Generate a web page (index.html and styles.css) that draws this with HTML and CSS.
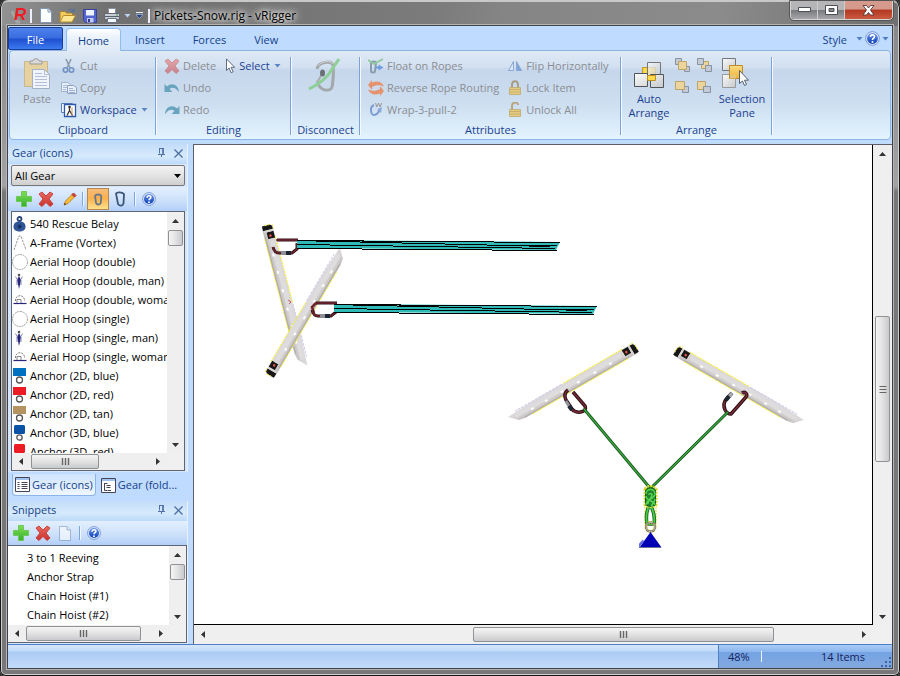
FILE: index.html
```html
<!DOCTYPE html>
<html lang="en">
<head>
<meta charset="utf-8">
<title>Pickets-Snow.rig - vRigger</title>
<link rel="stylesheet" href="styles.css">
</head>
<body>
<svg class="defs" aria-hidden="true">
  <defs>
    <linearGradient id="gBlue" x1="0" y1="0" x2="0" y2="1"><stop offset="0" stop-color="#6a94ea"/><stop offset="1" stop-color="#0b3fb8"/></linearGradient>
    <linearGradient id="gGreen" x1="0" y1="0" x2="0" y2="1"><stop offset="0" stop-color="#7ee052"/><stop offset="1" stop-color="#35ad2c"/></linearGradient>
    <linearGradient id="gRed" x1="0" y1="0" x2="0" y2="1"><stop offset="0" stop-color="#ea6a62"/><stop offset="1" stop-color="#c92f2b"/></linearGradient>
    <linearGradient id="gSteel" x1="0" y1="0" x2="1" y2="1"><stop offset="0" stop-color="#fbfbfb"/><stop offset="1" stop-color="#c6c9cc"/></linearGradient>
    <linearGradient id="gGold" x1="0" y1="0" x2="0" y2="1"><stop offset="0" stop-color="#fbdc85"/><stop offset="1" stop-color="#efb22e"/></linearGradient>
    <linearGradient id="gPicket" x1="0" y1="0" x2="0" y2="1"><stop offset="0" stop-color="#dedbdf"/><stop offset=".6" stop-color="#d6d3d4"/><stop offset="1" stop-color="#bdb8b6"/></linearGradient>
    <symbol id="i-plus" viewBox="0 0 16 16"><path d="M5.5.5h5v5h5v5h-5v5h-5v-5h-5v-5h5z" fill="url(#gGreen)" stroke="#6cc957"/></symbol>
    <symbol id="i-cross" viewBox="0 0 16 16"><path d="M1 3l3-2 4 4 4-4 3 2-4 5 4 5-3 2.500-4-4-4 4L1 13l4-5z" fill="url(#gRed)" stroke="#c8413c"/></symbol>
    <symbol id="i-help" viewBox="0 0 16 16"><circle cx="8" cy="8" r="7.300" fill="#e6eefb" stroke="#6a8fd6"/><circle cx="8" cy="8" r="5.800" fill="url(#gBlue)"/><path d="M5.800 6.500c0-3.200 4.600-2.900 4.400-.3C10.100 7.700 8 7.700 8 9.500" fill="none" stroke="#fff" stroke-width="1.700"/><circle cx="8" cy="11.700" r="1.100" fill="#fff"/></symbol>
    <symbol id="i-pointer" viewBox="0 0 12 18"><path d="M1.500 1v13l3-2.800 2.200 5.300 2.300-1-2.300-5h4z" fill="#fff" stroke="#4f5b73"/></symbol>
    <symbol id="i-pin" viewBox="0 0 9 10"><path d="M2.500 1v4.500M6 1v4.500" stroke="#5272a8"/><path d="M2 .5h5M1 6.500h7M4.500 6.500V9" fill="none" stroke="#5272a8"/><path d="M6 .5V6" stroke="#5272a8" stroke-width="1.500"/></symbol>
    <symbol id="i-close" viewBox="0 0 9 9"><path d="M.5.500l8 8M8.500.500l-8 8" stroke="#5272a8" stroke-width="1.400"/></symbol>
    <symbol id="i-doc" viewBox="0 0 12 15"><path d="M.5.500h7.500l3.500 3.500v10.500H.5z" fill="#fdfeff" stroke="#8297b5"/><path d="M8 .5V4h3.500" fill="#dce6f4" stroke="#8297b5"/></symbol>
    <symbol id="i-lock" viewBox="0 0 14 16"><path d="M4 8V5c0-5 6-5 6 0v3" fill="none" stroke="#a79c83" stroke-width="2"/><path d="M1.500 7.500h11v7h-11z" fill="#e3ca85" stroke="#c4b27d"/><path d="M2 9.500h10M2 12h10" stroke="#cdb067"/></symbol>
    <symbol id="i-unlock" viewBox="0 0 14 16"><path d="M4 8V4c0-4.500 6-4.500 6-1" fill="none" stroke="#b5a67e" stroke-width="2"/><path d="M1.500 7.500h11v7h-11z" fill="#e3ca85" stroke="#c4b27d"/><path d="M2 9.500h10M2 12h10" stroke="#cdb067"/></symbol>
    <symbol id="g-hoop" viewBox="0 0 16 16"><circle cx="8" cy="8" r="7.500" fill="#fff" stroke="#8c8c8c" stroke-dasharray="2 .7" stroke-width=".8"/></symbol>
    <symbol id="g-man" viewBox="0 0 16 16"><circle cx="7" cy="2" r="1.300" fill="#555"/><path d="M7 3l2 4-.8 4-1.200 5-1-5L5 7z" fill="#25257c"/><path d="M3.500 3.500l2 3.500M10.500 3.500l-2 3.500M5 7v5M9 7v5" stroke="#7b7bae" stroke-width=".9"/></symbol>
    <symbol id="g-woman" viewBox="0 0 16 16"><path d="M3.500 9c-.5-7 9.500-7 9 0" fill="none" stroke="#777" stroke-dasharray="2 1"/><path d="M1.500 11.500h13" stroke="#25257c" stroke-width="1.200"/><path d="M5 11V7.500h4V11" fill="none" stroke="#888"/></symbol>
    <symbol id="arrow" viewBox="0 0 7 4"><path d="M.5 0h6l-3 3.500z" fill="currentColor"/></symbol>
    <symbol id="thumb-v" viewBox="0 0 8 8"><path d="M.5 1.500h7M.5 4.500h7M.5 7.500h7" stroke="#666"/></symbol>
    <symbol id="thumb-h" viewBox="0 0 9 8"><path d="M1.500 0v7M4.500 0v7M7.500 0v7" stroke="#666" stroke-width="1.400"/></symbol>
    <symbol id="s-up" viewBox="0 0 7 4"><path d="M0 4h7L3.500 0z" fill="#333"/></symbol>
    <symbol id="s-down" viewBox="0 0 7 4"><path d="M0 0h7L3.500 4z" fill="#333"/></symbol>
    <symbol id="s-left" viewBox="0 0 4 7"><path d="M4 0v7L0 3.500z" fill="#333"/></symbol>
    <symbol id="s-right" viewBox="0 0 4 7"><path d="M0 0v7l4-3.500z" fill="#333"/></symbol>
  </defs>
</svg>

<div class="window">
  <header class="titlebar">
    <div class="quick">
      <svg class="logo" width="20" height="20" viewBox="0 0 20 20"><path d="M2 5l5 11h3" fill="none" stroke="#a3a5a7" stroke-width="3"/><text x="4" y="14">R</text></svg>
      <i class="tick"></i>
      <button aria-label="New"><svg width="12" height="15"><use href="#i-doc"/></svg></button>
      <button aria-label="Open"><svg width="17" height="15" viewBox="0 0 17 15"><path d="M1 14V3.500h5l1.500 1.500h6V8" fill="#f3cc60" stroke="#a5802d"/><path d="M1 14L4.500 7.500h12L13 14z" fill="#ffe793" stroke="#b58b2c"/><path d="M9 3c2-2.500 4-2 5.500 0M15 .5V4h-3.500" fill="none" stroke="#496fa9"/></svg></button>
      <button aria-label="Save"><svg width="14" height="14" viewBox="0 0 14 14"><path d="M.5.500h13v13h-11l-2-2z" fill="#5365cf" stroke="#39429e"/><path d="M3 1h8v5.500H3z" fill="#edf3ff"/><path d="M4 9h6.500v4.500H4z" fill="#c4cdf0"/><path d="M5 10h2v3H5z" fill="#31398b"/></svg></button>
      <button aria-label="Print"><svg width="16" height="15" viewBox="0 0 16 15"><path d="M4.500.5h7V6h-7z" fill="#fff" stroke="#8791a3"/><path d="M.5 5.500h15v6H.5z" fill="#c8ccd3" stroke="#616873"/><path d="M1 8.500h14" stroke="#59606b"/><path d="M3.500 10.500h9v4h-9z" fill="#f5f8ff" stroke="#68748a"/><path d="M12 7h2" stroke="#43a54a"/></svg></button>
      <svg class="qarrow" width="7" height="4"><use href="#arrow"/></svg>
      <svg class="qarrow last" width="7" height="7" viewBox="0 0 7 7"><path d="M0 .5h7" stroke="#e6efff"/><path d="M0 2.500h7L3.500 6.500z" fill="#204080" stroke="#b9cbe8" stroke-width=".6"/></svg>
      <i class="tick"></i>
    </div>
    <h1>Pickets-Snow.rig - vRigger</h1>
    <div class="caption">
      <button aria-label="Minimize"><svg width="13" height="6" viewBox="0 0 13 6"><path d="M.5.500h12v4H.5z" fill="#fff" stroke="#4b4f57"/></svg></button>
      <button aria-label="Maximize"><svg width="13" height="11" viewBox="0 0 13 11"><path d="M.5.500h12v9H.5z" fill="#fff" stroke="#4b4f57"/><path d="M4 3.500h5v3H4z" fill="#888" stroke="#4b4f57"/></svg></button>
      <button class="exit" aria-label="Close"><svg width="13" height="11" viewBox="0 0 13 11"><path d="M1 .500h3.500L6.500 3l2-2.500H12L8.500 5l3.500 5H8.500l-2-2.500-2 2.500H1L4.500 5z" fill="#fff" stroke="#54373a" stroke-width=".9"/></svg></button>
    </div>
  </header>

  <div class="client">
    <nav class="tabs">
      <button class="tab file">File</button>
      <button class="tab active">Home</button>
      <button class="tab">Insert</button>
      <button class="tab">Forces</button>
      <button class="tab">View</button>
      <div class="tabs-right">
        <button>Style</button>
        <svg width="7" height="4"><use href="#arrow"/></svg>
        <button aria-label="Help"><svg width="15" height="15"><use href="#i-help"/></svg></button>
        <svg width="7" height="4"><use href="#arrow"/></svg>
      </div>
    </nav>

    <section class="ribbon">
      <div class="group clipboard">
        <div class="body">
          <button class="big off"><svg width="28" height="32" viewBox="0 0 28 32"><path d="M1.500 3.500h23v25h-23z" fill="#e6d2a1" stroke="#c9b98f"/><path d="M7 6V3h3c0-3 6-3 6 0h3v3z" fill="#dadada" stroke="#999"/><path d="M9.500 11.500h12l5 5v14h-17z" fill="#f1f5fb" stroke="#a3b0c6"/><path d="M21.500 11.500v5h5M12 15.500h7M12 18.500h12M12 21.500h12M12 24.500h12M12 27.500h12" fill="none" stroke="#b2bfd6"/></svg><span>Paste</span></button>
          <div class="rows">
            <button class="off"><svg width="16" height="16" viewBox="0 0 16 16"><path d="M5 1l4 9M10 1l-4 9" stroke="#8c99ad" stroke-width="1.500"/><circle cx="4.500" cy="12" r="2.200" fill="none" stroke="#7291c3" stroke-width="1.600"/><circle cx="10.500" cy="12" r="2.200" fill="none" stroke="#7291c3" stroke-width="1.600"/></svg>Cut</button>
            <button class="off"><svg width="16" height="16" viewBox="0 0 16 16"><path d="M.5 2.500h6l3 2v7h-9z" fill="#eaf0f9" stroke="#9fb0cc"/><path d="M2 5.500h4M2 7.500h4M2 9.500h3" stroke="#a9b9d6"/><path d="M6.500 5.500h6l3 2v6h-9z" fill="#eaf0f9" stroke="#8fa2c3"/><path d="M8 8.500h4M8 10.500h6M8 12.500h6" stroke="#9bb0d3"/></svg>Copy</button>
            <button><svg width="16" height="16" viewBox="0 0 16 16"><path d="M.5 1.500h11v9H.5z" fill="#eef5ff" stroke="#5d7fb8"/><path d="M3.500 2.500h11v12h-11z" fill="#fff" stroke="#2f58a8" stroke-width="1.300"/><circle cx="8.500" cy="5" r="1.300" fill="#333"/><path d="M8.500 6v3M6 13.500l2.500-5 3 5" stroke="#333" fill="none" stroke-width="1.300"/><path d="M11 5.500v8" stroke="#d1924d"/></svg>Workspace<svg class="dd" width="7" height="4"><use href="#arrow"/></svg></button>
          </div>
        </div>
        <h2>Clipboard</h2>
      </div>
      <div class="group editing">
        <div class="body">
          <div class="rows">
            <button class="off"><svg class="faded" width="16" height="16"><use href="#i-cross"/></svg>Delete</button>
            <button class="off"><svg width="16" height="16" viewBox="0 0 16 16"><path d="M.5 4v8h8L5.500 9c3-2.500 6-1.500 9.500 3-.5-7-7-10-12-5.500z" fill="#69a3bd"/></svg>Undo</button>
            <button class="off"><svg width="16" height="16" viewBox="0 0 16 16"><path d="M15.500 4v8h-8l3-3C7.500 6.500 4.500 7.500 1 12c.5-7 7-10 12-5.500z" fill="#69a3bd"/></svg>Redo</button>
          </div>
          <div class="rows tight">
            <button><svg width="11" height="16"><use href="#i-pointer"/></svg>Select<svg class="dd" width="7" height="4"><use href="#arrow"/></svg></button>
          </div>
        </div>
        <h2>Editing</h2>
      </div>
      <div class="group disconnect">
        <div class="body">
          <button class="big off" aria-label="Disconnect"><svg width="34" height="34" viewBox="0 0 34 34"><path d="M9 11c1-7 14-9 16-4 1 3 0 18-1 22-1 4-8 4-11 1-3-3-4-5-3-7" fill="none" stroke="#a3a8aa" stroke-width="3"/><path d="M10 8c3-5 13-6 15-2" fill="none" stroke="#d3d6d8"/><path d="M10 23l5-9" stroke="#a9adb0" stroke-width="2"/><ellipse cx="14.500" cy="15" rx="2.500" ry="3.500" fill="#6a7075"/><path d="M1 31c8-4 13-7 19-14L31 1" fill="none" stroke="#8dcf96" stroke-width="3"/></svg></button>
        </div>
        <h2>Disconnect</h2>
      </div>
      <div class="group attributes">
        <div class="body">
          <div class="rows">
            <button class="off"><svg width="16" height="16" viewBox="0 0 16 16"><path d="M3 5c0-2 5-2 5 0l-1 8c0 2-4 2-4 0z" fill="none" stroke="#8b9cae" stroke-width="2"/><path d="M0 2l6 4 9-5" fill="none" stroke="#8dc99a" stroke-width="1.600"/><path d="M15.500 9.500l-5-3v2h-3v2h3v2z" fill="#6d9ce0"/></svg>Float on Ropes</button>
            <button class="off"><svg width="16" height="16" viewBox="0 0 16 16"><path d="M0 5l4-5v2.500c5-2 10-1 12 4-4-1.500-8-2-12 .5v3z" fill="#e5936e"/><path d="M16 11l-4 5v-2.500c-5 2-10 1-12-4 4 1.500 8 2 12-.5V6z" fill="#e5936e"/></svg>Reverse Rope Routing</button>
            <button class="off"><svg width="16" height="16" viewBox="0 0 16 16"><path d="M6 3C1 5 3 13 6 13s5-3 6-7" fill="none" stroke="#7d9cd4" stroke-width="2"/><path d="M9 8l5-3-1 6z" fill="#88a8de"/><path d="M7.500 1l1.300 4 1.700-4 1.700 4 1.300-4" fill="none" stroke="#999"/></svg>Wrap-3-pull-2</button>
          </div>
          <div class="rows flip">
            <button class="off"><svg width="14" height="14" viewBox="0 0 14 14"><path d="M5.500 2.500v9h-5z" fill="#dbe7f8" stroke="#8ba7d3"/><path d="M8.500 2.500v9h5z" fill="#7fa3dc" stroke="#8ba7d3"/></svg>Flip Horizontally</button>
            <button class="off"><svg width="14" height="16"><use href="#i-lock"/></svg>Lock Item</button>
            <button class="off"><svg width="14" height="16"><use href="#i-unlock"/></svg>Unlock All</button>
          </div>
        </div>
        <h2>Attributes</h2>
      </div>
      <div class="group arrange">
        <div class="body">
          <button class="big"><svg width="30" height="32" viewBox="0 0 30 32"><path d="M8.500 9.500h13v13h-13z" fill="#ffd84c" stroke="#c89a2b"/><path d="M13.500 4.500h13v13h-13z" fill="url(#gSteel)" fill-opacity=".75" stroke="#777"/><path d="M.5 15.500h13v13H.5zM16.500 16.500h13v13h-13z" fill="url(#gSteel)" stroke="#50555a"/><path d="M13.500 17.500h8v5h-8z" fill="#ffd84c" stroke="#ba9120"/></svg><span>Auto<br>Arrange</span></button>
          <div class="minis">
            <button aria-label="Bring forward"><svg width="16" height="16" viewBox="0 0 16 16"><path d="M.5.500h6v6h-6zM9.500 8.500h5v5h-5z" fill="#c5cbd4" stroke="#8792a2"/><path d="M3.500 3.500h8v8h-8z" fill="#ecd59d" stroke="#bfa266"/></svg></button>
            <button aria-label="Send backward"><svg width="16" height="16" viewBox="0 0 16 16"><path d="M4.500 3.500h7v7h-7z" fill="#ecd59d" stroke="#bfa266"/><path d="M.5.500h6v6h-6zM8.500 7.500h6v6h-6z" fill="#c5cbd4" stroke="#8792a2"/></svg></button>
            <button aria-label="Bring to front"><svg width="16" height="16" viewBox="0 0 16 16"><path d="M7.500 6.500h6v6h-6z" fill="#c5cbd4" stroke="#8792a2"/><path d="M.5 1.500h9v8h-9z" fill="#ecd59d" stroke="#bfa266"/></svg></button>
            <button aria-label="Send to back"><svg width="16" height="16" viewBox="0 0 16 16"><path d="M.5 1.500h8v8h-8z" fill="#ecd59d" stroke="#bfa266"/><path d="M6.500 6.500h7v6h-7z" fill="#c5cbd4" stroke="#8792a2"/></svg></button>
          </div>
          <button class="big"><svg width="32" height="32" viewBox="0 0 32 32"><path d="M.5.500h13v12H.5z" fill="url(#gSteel)" stroke="#71777d"/><path d="M.5 16.500h13v13H.5z" fill="url(#gSteel)" stroke="#999"/><path d="M7.500 7.500h13v13h-13z" fill="url(#gGold)" stroke="#c08a2b"/><path d="M8 16.500h6v4H8z" fill="#e3c679"/><path d="M17.500 12.500v13l3-2.500 2 4.500 2-1-2-4.300h4z" fill="#fff" stroke="#555f70"/></svg><span>Selection<br>Pane</span></button>
        </div>
        <h2>Arrange</h2>
      </div>
    </section>

    <main class="work">
      <aside class="side">
        <section class="panel gear">
          <div class="panel-head"><h3>Gear (icons)</h3><button aria-label="Pin"><svg width="9" height="10"><use href="#i-pin"/></svg></button><button aria-label="Close panel"><svg width="9" height="9"><use href="#i-close"/></svg></button></div>
          <div class="picker">
            <select aria-label="Gear category"><option>All Gear</option></select>
            <svg width="9" height="5" viewBox="0 0 9 5"><path d="M1 0h7L4.500 4z" fill="#000"/></svg>
          </div>
          <div class="tools">
            <button aria-label="Add gear"><svg width="16" height="16"><use href="#i-plus"/></svg></button>
            <button aria-label="Delete gear"><svg width="16" height="16"><use href="#i-cross"/></svg></button>
            <button aria-label="Edit gear"><svg width="14" height="14" viewBox="0 0 14 14"><path d="M1 13l1.500-4L9 2.500 11.500 5 5 11.500z" fill="#f8bd35" stroke="#b67a1f" stroke-width=".8"/><path d="M9 2.500L10.500 1 13 3.500 11.500 5z" fill="#dd4638" stroke="#a92c24"/><path d="M1 13l.8-2 1.300 1.300z" fill="#222"/></svg></button>
            <i class="tick"></i>
            <button class="pressed" aria-label="Small icons"><svg width="12" height="16" viewBox="0 0 12 16"><path d="M3 5c1-2 5-2 6.300 0L8.700 12c-.7 2-3.700 2-4.700 0z" fill="none" stroke="#6a7788" stroke-width="1.800"/></svg></button>
            <button class="wide" aria-label="Large icons"><svg width="12" height="16" viewBox="0 0 12 16"><path d="M2 2.500C3 .8 8 .8 10 3l-.5 9.500c-1 3-4 2.500-5.500.5z" fill="none" stroke="#3b5778" stroke-width="1.800"/></svg></button>
            <i class="tick"></i>
            <button aria-label="Gear help"><svg width="14" height="14"><use href="#i-help"/></svg></button>
          </div>
          <div class="list-box">
            <ul class="list">
              <li><svg width="16" height="16" viewBox="0 0 16 16"><circle cx="7.500" cy="3" r="2" fill="none" stroke="#29457c" stroke-width="1.800"/><path d="M7.500 5c5 1 6 3 6 6s-3 4.500-6 4.500S1.500 14 1.500 11s1-5 6-6z" fill="#2f5596"/><circle cx="7.500" cy="10.500" r="2" fill="#173163"/></svg>540 Rescue Belay</li>
              <li><svg width="16" height="16" viewBox="0 0 16 16"><path d="M2 15L7 1h2l5 14" fill="none" stroke="#999" stroke-dasharray="2.500 1"/></svg>A-Frame (Vortex)</li>
              <li><svg width="16" height="16"><use href="#g-hoop"/></svg>Aerial Hoop (double)</li>
              <li><svg width="16" height="16"><use href="#g-man"/></svg>Aerial Hoop (double, man)</li>
              <li><svg width="16" height="16"><use href="#g-woman"/></svg>Aerial Hoop (double, woman)</li>
              <li><svg width="16" height="16"><use href="#g-hoop"/></svg>Aerial Hoop (single)</li>
              <li><svg width="16" height="16"><use href="#g-man"/></svg>Aerial Hoop (single, man)</li>
              <li><svg width="16" height="16"><use href="#g-woman"/></svg>Aerial Hoop (single, woman)</li>
              <li><svg width="16" height="16" viewBox="0 0 16 16"><path d="M1 0h13v8H1z" fill="#0070c0"/><circle cx="7.500" cy="12" r="3" fill="none" stroke="#555" stroke-width="1.300"/></svg>Anchor (2D, blue)</li>
              <li><svg width="16" height="16" viewBox="0 0 16 16"><path d="M1 0h13v8H1z" fill="#ed1c24"/><circle cx="7.500" cy="12" r="3" fill="none" stroke="#555" stroke-width="1.300"/></svg>Anchor (2D, red)</li>
              <li><svg width="16" height="16" viewBox="0 0 16 16"><path d="M1 0h13v8H1z" fill="#b5935f"/><circle cx="7.500" cy="12" r="3" fill="none" stroke="#555" stroke-width="1.300"/></svg>Anchor (2D, tan)</li>
              <li><svg width="16" height="16" viewBox="0 0 16 16"><path d="M3 0h9l1 1v7l-1 1H3L2 8V1z" fill="#0a52a5"/><circle cx="7.500" cy="12.500" r="2.700" fill="none" stroke="#555" stroke-width="1.300"/></svg>Anchor (3D, blue)</li>
              <li><svg width="16" height="16" viewBox="0 0 16 16"><path d="M3 0h9l1 1v7l-1 1H3L2 8V1z" fill="#ed1c24"/><circle cx="7.500" cy="12.500" r="2.700" fill="none" stroke="#555" stroke-width="1.300"/></svg>Anchor (3D, red)</li>
            </ul>
            <div class="sv sv-list"><svg width="7" height="4"><use href="#s-up"/></svg><i></i><b></b><i></i><svg width="7" height="4"><use href="#s-down"/></svg></div>
            <div class="sh sh-list"><svg width="4" height="7"><use href="#s-left"/></svg><i></i><b><svg width="9" height="8"><use href="#thumb-h"/></svg></b><i></i><svg width="4" height="7"><use href="#s-right"/></svg></div>
          </div>
        </section>
        <div class="dock-tabs">
          <button class="on"><svg width="15" height="15" viewBox="0 0 15 15"><path d="M.5.500h14v14H.5z" fill="#fff" stroke="#445"/><path d="M1 2h13" stroke="#9fc3ee" stroke-width="2"/><path d="M2.500 5.500h2M2.500 7.500h2M2.500 9.500h2M2.500 11.500h2M6.500 5.500h6M6.500 7.500h6M6.500 9.500h6M6.500 11.500h6" stroke="#445"/></svg>Gear (icons)</button>
          <button><svg width="15" height="15" viewBox="0 0 15 15"><path d="M.5.500h14v14H.5z" fill="#fff" stroke="#445"/><path d="M1 2h13" stroke="#9fc3ee" stroke-width="2"/><path d="M3.500 5v7.500h3M3.500 5.500h3M5.500 7.500h4M5.500 9.500h4M7 12.500h3" fill="none" stroke="#445"/></svg>Gear (fold...</button>
        </div>
        <section class="panel snippets">
          <div class="panel-head"><h3>Snippets</h3><button aria-label="Pin"><svg width="9" height="10"><use href="#i-pin"/></svg></button><button aria-label="Close panel"><svg width="9" height="9"><use href="#i-close"/></svg></button></div>
          <div class="tools">
            <button aria-label="Add snippet"><svg width="16" height="16"><use href="#i-plus"/></svg></button>
            <button aria-label="Delete snippet"><svg width="16" height="16"><use href="#i-cross"/></svg></button>
            <button class="faded" aria-label="New snippet"><svg width="12" height="15"><use href="#i-doc"/></svg></button>
            <i class="tick"></i>
            <button aria-label="Snippets help"><svg width="14" height="14"><use href="#i-help"/></svg></button>
          </div>
          <div class="list-box">
            <ul class="list plain"><li>3 to 1 Reeving</li><li>Anchor Strap</li><li>Chain Hoist (#1)</li><li>Chain Hoist (#2)</li></ul>
            <div class="sv sv-snip"><svg width="7" height="4"><use href="#s-up"/></svg><i></i><b></b><i></i><svg width="7" height="4"><use href="#s-down"/></svg></div>
            <div class="sh sh-snip"><svg width="4" height="7"><use href="#s-left"/></svg><i></i><b><svg width="9" height="8"><use href="#thumb-h"/></svg></b><i></i><svg width="4" height="7"><use href="#s-right"/></svg></div>
          </div>
        </section>
      </aside>

      <section class="stage">
        <div class="canvas">
          <svg class="drawing" role="img" aria-label="Rigging drawing">
            <defs>
              <g id="picket">
                <path d="M-4-5.500H104L141-4l-8 8-7 1.500H-4z" fill="url(#gPicket)"/>
                <path d="M8-5.500H76M8 5.500H118" stroke="#f4ee2c" stroke-dasharray="2 1" fill="none"/>
                <path d="M78-5.500H132" stroke="#cfcbe6" stroke-dasharray="3 1"/>
                <path d="M6 4.500H126" stroke="#b1aba8"/>
                <path d="M12-1H134" stroke="#dfdcde" stroke-width="4"/>
                <path d="M24 1h3M42 1h3M61 1h3M80 1h3M98 1h3M114 1h3" stroke="#fff" stroke-width="2"/>
                <path d="M-5-3l2-2h3v10h-5zM2-5h7v7H2z" fill="#181616"/>
                <path d="M0-4h2V5H0zM9-3h2v5H9z" fill="#d9d5d2"/><path d="M-4-5.500h4M-5-3v6" stroke="#e9e23a" stroke-dasharray="2 1"/>
                <circle cx="6" cy="-1" r="1.300" fill="#e0524a"/>
              </g>
              <g id="rope">
                <path d="M297 240L560 242l-4 8-259-2z" fill="#2fbab8"/>
                <g shape-rendering="crispEdges" stroke="#000" fill="none">
                  <path d="M297 240.500h67M362 241.500h132M494 242.500h66M316 241.500h44M360 242.500h42M402 243.500h43M445 244.500h42M487 245.500h70M297 244.500h33M330 245.500h63M393 246.500h65M458 247.500h64M522 248.500h33M297 248.500h65M362 249.500h130M492 250.500h65M529 246.500h21"/>
                </g>
              </g>
              <g id="biner">
                <path d="M4 1H25M0 8c1 4 3 6 6 6h13l5-4V4" fill="none" stroke="#2b1218" stroke-width="3"/>
                <path d="M3 1H25M0 8c1 4 3 6 6 6h13l5-4V4" fill="none" stroke="#74242f" stroke-width="1.500"/>
                <path d="M8 14h5" stroke="#8c9499" stroke-width="3"/><path d="M13 14h5" stroke="#1d2733" stroke-width="4"/>
              </g>
            </defs>
            <g transform="translate(-194 -145)">
            <use href="#picket" transform="translate(268 230) rotate(75.400)"/>
            <use href="#picket" transform="translate(272 371) rotate(-59.600)"/>
            <use href="#picket" transform="translate(632 350) scale(-1 1) rotate(30)"/>
            <use href="#picket" transform="translate(680 353) rotate(30)"/>
            <path d="M288 300l3 2-2 2" fill="none" stroke="#cc5a62"/>
            <use href="#biner" transform="translate(273 239)"/>
            <path d="M314 313l-2-6 4-4" fill="none" stroke="#74242f" stroke-width="2.500"/>
            <use href="#biner" transform="translate(312 302)"/>
            <use href="#rope"/>
            <use href="#rope" transform="translate(37 64)"/>
            <g fill="none" stroke-linejoin="round">
              <path d="M568 390c-4 3-4 6-2 10l6 9c3 5 16 4 13-3l-12-14" stroke="#2b1218" stroke-width="3.500"/>
              <path d="M568 390c-4 3-4 6-2 10l6 9c3 5 16 4 13-3l-12-14" stroke="#7a2a35" stroke-width="1.500"/>
              <path d="M566 401l3 5" stroke="#8c9499" stroke-width="3"/><path d="M569 406l3 4" stroke="#1d2733" stroke-width="4"/>
              <path d="M732 393l-7 8c-3 6 1 13 6 13l15-17c2-3-1-6-4-4" stroke="#2b1218" stroke-width="3.500"/>
              <path d="M725 401c-3 6 1 13 6 13l15-17c2-3-1-6-4-4" stroke="#7a2a35" stroke-width="1.500"/>
              <path d="M732 393l-3 4" stroke="#a6abb0" stroke-width="3"/><path d="M729 396l-3 4" stroke="#1d2733" stroke-width="4"/>
              <path d="M584 409l66 79M728 412l-77 76" stroke="#16541c" stroke-width="3"/>
              <path d="M584 409l66 79M728 412l-77 76" stroke="#3aa83c" stroke-width="1.200"/>
              <path d="M645 507v19M656 507v19" stroke="#e3dc2f" stroke-dasharray="2 1"/>
              <path d="M649 506c-3 6-3 12-2 18h7c1-6 0-12-3-18" stroke="#1c6b22" stroke-width="3.500"/>
              <path d="M649 506c-3 6-3 12-2 18h7c1-6 0-12-3-18" stroke="#45cb48" stroke-width="1.700"/>
              <path d="M645 489q5-5 11 0v16q-5 3-11 0z" fill="#2f9a34" stroke="#ddd62d" stroke-dasharray="2 1" stroke-width="3"/>
              <path d="M645.500 490q5-5 10 0v15q-5 3-10 0z" fill="#237f2a" stroke="#17631d"/>
              <path d="M646 494c0-6 9-6 9 0 0 5-9 5-9 11M646 496c0 5 9 5 9 9M649 495c0-2 3-2 3 0 0 3-5 6-4 9M652 507c-1-4 3-4 3-8" stroke="#53d253" stroke-width="1.600"/>
              <circle cx="650.500" cy="527" r="4.500" stroke="#d8cd32" stroke-width="3" stroke-dasharray="2 1"/>
              <circle cx="650.500" cy="527" r="4.500" stroke="#5c5a50" stroke-width="2"/>
              <circle cx="650.500" cy="527" r="4.500" stroke="#d3cfc2"/>
            </g>
            <path d="M650.500 532l11 15.500h-22z" fill="#0000b4"/><path d="M639 547.500v-4l4-4 1 2z" fill="#5c6ae6"/><path d="M639 547.500h22" stroke="#6b7392"/>
            </g>
          </svg>
        </div>
        <div class="sv sv-main"><svg width="7" height="4"><use href="#s-up"/></svg><i></i><b><svg width="8" height="8"><use href="#thumb-v"/></svg></b><i></i><svg width="7" height="4"><use href="#s-down"/></svg></div>
        <div class="sh sh-main"><svg width="4" height="7"><use href="#s-left"/></svg><i></i><b><svg width="9" height="8"><use href="#thumb-h"/></svg></b><i></i><svg width="4" height="7"><use href="#s-right"/></svg></div>
      </section>
    </main>

    <footer class="status">
      <div class="status-info">
        <span>48%</span><i class="tick"></i><span class="count">14 Items</span>
        <svg width="12" height="12" viewBox="0 0 12 12"><path d="M9 1h2v2H9zM5 5h2v2H5zM9 5h2v2H9zM1 9h2v2H1zM5 9h2v2H5zM9 9h2v2H9z" fill="#3f66a8"/></svg>
      </div>
    </footer>
  </div>
</div>
</body>
</html>
```
FILE: styles.css
```css
* { box-sizing: border-box; margin: 0; padding: 0; }
html, body { height: 100%; }
body { font: 11px/16px "Open Sans", "Noto Sans", sans-serif; color: #000; background: #333; }
button { font: inherit; color: inherit; background: none; border: 0; display: flex; align-items: center; white-space: nowrap; }
svg { display: block; flex: none; }
h1, h2, h3 { font-size: inherit; font-weight: normal; }
ul { list-style: none; }
.defs { position: absolute; width: 0; height: 0; }
.faded { opacity: .5; }
.tick { width: 2px; height: 14px; border-left: 1px solid #7ba6dd; border-right: 1px solid #eef6ff; }

/* Window frame */
.window {
  height: 100vh; min-height: 560px; display: flex; flex-direction: column; padding: 0 8px 8px;
  border-radius: 8px 8px 6px 6px;
  background: linear-gradient(#858585 0, #a2a2a2 186px, #777 192px, #787878);
  box-shadow: inset 0 0 0 1px #17171a, inset 0 0 0 2px #cfcfcf;
}
.titlebar {
  display: flex; align-items: center; height: 26px; flex: none; padding-top: 3px;
  margin: 0 -6px; padding-left: 8px;
  background: linear-gradient(100deg, #929292 0, #707070 12%, #7b7b7b 48%, #858585 56%, #8b8b8b 80%, #6f6f6f 100%);
  border-top: 2px solid #c8c8c8; border-radius: 6px 6px 0 0;
}
.quick { display: flex; align-items: center; }
.quick button { margin-right: 7px; }
.quick .tick { height: 14px; margin: 0 8px 0 0; border-color: #7b9fcf #eef; }
.quick .tick:last-child { margin: 0 4px 0 5px; }
.logo text { font: italic bold 17px "Liberation Sans", sans-serif; fill: #ee1c25; }
.qarrow { color: #bcd3f5; margin: 0 5px 0 -3px; }
.qarrow.last { margin: 0; }
.titlebar h1 { font-size: 12px; text-shadow: 0 0 5px #fff, 0 0 8px #ddd, 0 0 10px #ddd; }
.caption { display: flex; margin-left: auto; align-self: flex-start; margin-top: -4px; height: 19px; border: 1px solid #d5d5d5; border-top: 0; border-radius: 0 0 4px 4px; outline: 1px solid #555; overflow: hidden; margin-right: 5px; }
.caption button { width: 27px; justify-content: center; background: linear-gradient(#b5b5b7 0 48%, #77787b 50%, #a6a7aa); border-right: 1px solid #ccc; }
.caption .exit { width: 47px; border: 0; background: linear-gradient(#d69a8c 0 45%, #b33820 50%, #cb5b42); }
.client { flex: 1; min-height: 0; display: flex; flex-direction: column; background: #bfdbff; outline: 1px solid #3f4248; box-shadow: 0 0 0 2px #b5b5b5; }

/* Tabs */
.tabs { display: flex; height: 23px; flex: none; margin-top: 1px; color: #15428b; align-items: stretch; }
.tab { padding: 2px 14px 0; justify-content: center; }
.tab.file { margin: 0 3px 0 0; width: 55px; color: #fff; background: linear-gradient(#4d82ea 0, #3a6de0 45%, #1f50cf 55%, #3b7bf0); border: 1px solid #1a3c96; border-radius: 2px; }
.tab.active { margin: 1px 0 -1px; width: 55px; padding: 1px 0 0; background: linear-gradient(#fff, #eaf2fb 40%, #e0ebf7); border: 1px solid #8fbef0; border-bottom: 0; border-radius: 4px 4px 0 0; z-index: 1; }
.tabs-right { display: flex; align-items: center; margin-left: auto; gap: 5px; padding: 0 3px 0 0; color: #4f7ec0; }
.tabs-right button:first-child { color: #15428b; margin-right: 4px; padding-top: 2px; }
.tabs-right svg:last-child { margin-left: -3px; }

/* Ribbon */
.ribbon { display: flex; flex: none; height: 90px; margin: 0 1px; padding-left: 1px; border: 1px solid #8db5e6; border-radius: 4px; color: #1b3f91; background: linear-gradient(#dee9f5 0, #d2e0f0 18%, #c6d7ec 22%, #cddef0 60%, #e3f4fe 100%); }
.group { display: flex; flex-direction: column; position: relative; padding: 4px 4px 0; }
.group::after { content: ""; position: absolute; right: 0; top: 6px; bottom: 4px; width: 2px; background: linear-gradient(90deg, #7ba3d8 50%, #f4faff 50%); }
.body { display: flex; flex: none; height: 66px; }
.group h2 { text-align: center; line-height: 18px; padding-right: 2px; }
.rows { display: flex; flex-direction: column; }
.rows button { height: 22px; gap: 3px; }
.rows .dd { margin-left: 1px; }
.dd { color: #5b84c4; }
.off { color: #8b8d92; }
.big { flex-direction: column; padding-top: 3px; gap: 2px; line-height: 14px; text-align: center; align-self: flex-start; }
.clipboard { width: 146px; }
.clipboard .big { width: 44px; margin-right: 2px; }
.editing { width: 135px; }
.editing .rows { padding-left: 3px; }
.editing .rows.tight { padding-left: 9px; }
.disconnect { width: 69px; padding-inline: 0; }
.disconnect .big { width: 100%; align-items: center; padding-right: 3px; }
.attributes { width: 261px; }
.attributes .body { padding-left: 3px; }
.attributes .flip { margin-left: 9px; }
.flip button { gap: 4px; }
.arrange { width: 151px; padding-inline: 2px; }
.arrange .big { width: 50px; }
.minis { display: grid; grid-template: 22px 22px / 22px 22px; padding: 3px 0 0 1px; align-content: start; }
.minis button { align-items: flex-start; }
.arrange .minis + .big { width: 46px; }
.minis + .big svg { align-self: flex-start; margin-left: 3px; }

/* Work area */
.work { flex: 1; min-height: 0; display: flex; gap: 5px; padding: 4px 0 0; }
.side { width: 180px; flex: none; display: flex; flex-direction: column; color: #15428b; }
.panel { display: flex; flex-direction: column; min-height: 0; background: #d5e5fb; border-right: 1px solid #e8f2ff; }
.gear { flex: 330 1 0; padding: 0 2px 1px 3px; }
.panel-head { display: flex; align-items: center; height: 20px; flex: none; padding: 0 4px 2px 4px; gap: 8px; background: linear-gradient(#c3dcfa, #d6eafb 60%, #bddafa); }
.gear .panel-head { margin: 0 -2px 0 -3px; }
.panel-head h3 { flex: 1; }
.picker { position: relative; flex: none; height: 21px; margin: 1px 0; }
.picker select { appearance: none; width: 100%; height: 100%; font: inherit; color: #000; padding: 0 3px; border: 1px solid #777; border-radius: 2px; background: linear-gradient(#f3f3f3, #e4e4e4 50%, #cfcfcf); }
.picker svg { position: absolute; right: 3px; top: 9px; pointer-events: none; }
.tools { display: flex; align-items: center; height: 24px; flex: none; gap: 6px; padding: 0 5px; background: linear-gradient(#e3efff, #cbdffa 60%, #b1cff9); }
.gear .tools { margin: 0 -2px 0 -3px; padding-left: 8px; }
.gear .tools button:nth-child(3) { margin-left: 3px; margin-right: -1px; }
.tools .faded { margin-inline: 2px; opacity: .6; }
.pressed { width: 22px; height: 22px; justify-content: center; margin: 0 -1px 0 -3px; background: linear-gradient(#f6bd7c, #fbb04c 45%, #fee08a); border: 1px solid #b3894f; }
.wide { width: 14px; }
.list-box { flex: 1; min-height: 0; display: grid; grid-template: minmax(0, 1fr) 17px / minmax(0, 1fr) 17px; border: 1px solid #5f6672; background: #f0f0f0; }
.list { grid-area: 1 / 1; overflow: hidden; background: #fff; color: #000; padding-top: 2px; }
.list li { display: flex; align-items: center; height: 19px; gap: 2px; white-space: nowrap; }
.plain li { padding-left: 19px; }
.snippets { flex: 143 1 0; padding-bottom: 1px; }
.snippets .list-box { border-left: 0; }
.dock-tabs { display: flex; flex: none; height: 23px; margin: 2px 0 4px; padding-left: 4px; gap: 3px; }
.dock-tabs button { gap: 2px; padding: 0 2px; height: 22px; }
.dock-tabs .on { background: linear-gradient(#cfe4fc, #eff7ff); border: 1px solid #8cb4e8; border-top: 0; border-radius: 0 0 4px 4px; }

/* Scroll bars */
.sv, .sh { display: grid; place-items: center; background: #efefef; }
.sv i, .sh i { width: 1px; height: 1px; }
.sv b, .sh b { display: grid; place-items: center; border: 1px solid #8f9195; border-radius: 2px; }
.sv b { width: 15px; height: 100%; background: linear-gradient(90deg, #f5f5f5, #e2e2e2 50%, #c9cacd); }
.sh b { width: 100%; height: 15px; background: linear-gradient(#f5f5f5, #e2e2e2 50%, #c9cacd); }
.sv-list { grid-template-rows: 17px 1fr 16px 200fr 17px; }
.sh-list { grid-template-columns: 17px 2fr 68px 50fr 17px; }
.sv-snip { grid-template-rows: 17px 1fr 16px 28fr 17px; }
.sh-snip { grid-template-columns: 17px 1fr 115px 9fr 17px; }
.stage { flex: 1; min-width: 0; display: grid; grid-template: minmax(0, 1fr) 19px / minmax(0, 1fr) 19px; border: 1px solid #5c5f66; border-right: 0; border-bottom: 0; background: #f0f0f0; }
.canvas { background: #fff; border-right: 1px solid #000; border-bottom: 1px solid #000; min-height: 0; overflow: hidden; }
.drawing { width: 100%; height: 100%; }
.sv-main { grid-template-rows: 17px 154fr 147fr 146fr 17px; }
.sh-main { grid-template-columns: 17px 262fr 302fr 82fr 17px; }

/* Status bar */
.status { display: flex; flex: none; height: 24px; border-top: 1px solid #4e7fc4; background: linear-gradient(#d5e6fb 0, #c5dcf8 25%, #acccf4 30%, #c2daf9 100%); }
.status-info { margin-left: auto; width: 174px; display: flex; align-items: center; padding-left: 9px; color: #13245f; border-left: 1px solid #4f80c4; background: linear-gradient(#a9cbf6 0, #8db7ee 30%, #75a3e4 32%, #83a9de 100%); }
.status-info .tick { height: 11px; margin-left: 10px; border-left: 0; }
.count { margin-left: auto; margin-right: 15px; }
.status-info svg { align-self: flex-end; }
```
